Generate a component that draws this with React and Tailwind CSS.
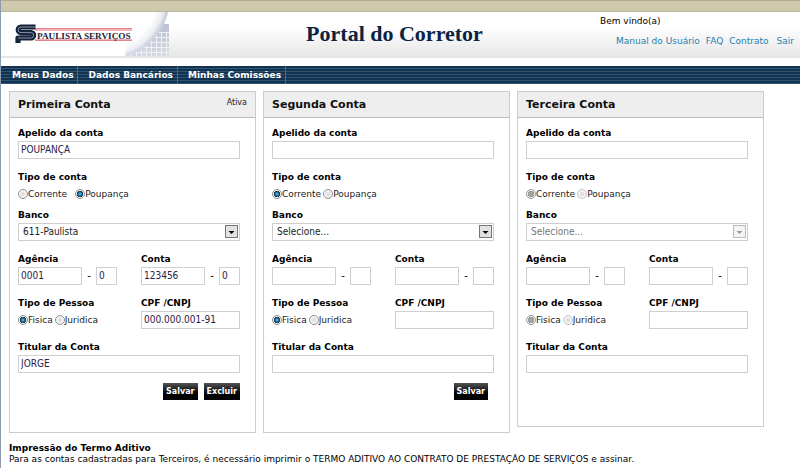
import { useState } from 'react';

const accounts = [
  {
    id: 'primeira',
    title: 'Primeira Conta',
    status: 'Ativa',
    nickname: 'POUPANÇA',
    type: 'poupanca',
    bank: '611-Paulista',
    branch: '0001',
    branchDigit: '0',
    number: '123456',
    numberDigit: '0',
    document: '000.000.001-91',
    holder: 'JORGE',
    actions: ['Salvar', 'Excluir'],
  },
  { id: 'segunda', title: 'Segunda Conta', type: 'corrente', bank: 'Selecione...', actions: ['Salvar'] },
  { id: 'terceira', title: 'Terceira Conta', type: 'corrente', bank: 'Selecione...', actions: [], disabled: true },
];

const navItems = ['Meus Dados', 'Dados Bancários', 'Minhas Comissões'];

const inputClass =
  "block h-[18px] min-w-0 rounded-none border border-[#cfcfcf] bg-white px-0.5 pb-px font-['DejaVu_Sans_Condensed','DejaVu_Sans',sans-serif] text-[10px] leading-[14px] text-[#2b1b4b] outline-none focus:border-[#1f7fb0]";

function Label({ htmlFor, children }) {
  return (
    <label htmlFor={htmlFor} className="block text-[9px] leading-4 font-bold text-black">
      {children}
    </label>
  );
}

function TextField({ id, label, value }) {
  return (
    <div>
      <Label htmlFor={id}>{label}</Label>
      <input id={id} type="text" defaultValue={value} className={`${inputClass} w-full`} />
    </div>
  );
}

// Number plus its check digit
function NumberField({ id, label, value, digit }) {
  return (
    <div>
      <Label htmlFor={id}>{label}</Label>
      <div className="flex items-center">
        <input id={id} type="text" defaultValue={value} className={`${inputClass} flex-1`} />
        <span className="w-3.5 text-center text-[10px] leading-4">-</span>
        <input aria-label={`${label} dígito`} type="text" defaultValue={digit} className={`${inputClass} w-[21px]`} />
      </div>
    </div>
  );
}

function RadioGroup({ name, legend, options, value, onChange, disabled, wide }) {
  return (
    <fieldset>
      <legend className="block text-[9px] leading-4 font-bold text-black">{legend}</legend>
      <div className={`flex h-[18px] items-center ${wide ? 'gap-2' : 'gap-0.5'}`}>
        {options.map((option) => (
          <label key={option.value} className="flex items-center text-[9px] leading-4 text-[#222]">
            <input
              type="radio"
              name={name}
              value={option.value}
              checked={value === option.value}
              disabled={disabled}
              onChange={() => onChange(option.value)}
              className="size-2.5 shrink-0 appearance-none rounded-full border border-[#8e8f8f] bg-[radial-gradient(circle,#d6d6d6,#fafafa_70%)] checked:bg-[radial-gradient(circle,#7cc4e8_0px,#15618c_2px,#123a58_3px,#f4f4f4_3px)] disabled:border-[#c4c4c4] disabled:checked:border-[#999] disabled:checked:bg-[radial-gradient(circle,#aaa_0px,#999_3px,#f4f4f4_3px)]"
            />
            {option.label}
          </label>
        ))}
      </div>
    </fieldset>
  );
}

function BankSelect({ id, value, disabled }) {
  return (
    <div>
      <Label htmlFor={id}>Banco</Label>
      <div className="relative">
        <select
          id={id}
          defaultValue={value}
          disabled={disabled}
          className="block h-[18px] w-full appearance-none rounded-none border border-[#cfcfcf] bg-white pl-1 font-['DejaVu_Sans_Condensed','DejaVu_Sans',sans-serif] text-[10px] leading-4 text-[#222] outline-none disabled:text-[#777] disabled:opacity-100"
        >
          <option>Selecione...</option>
          <option>611-Paulista</option>
        </select>
        <svg
          viewBox="0 0 13 14"
          className={`pointer-events-none absolute top-0.5 right-0.5 h-3.5 w-[13px] ${disabled ? 'text-[#999]' : 'text-black'}`}
        >
          <rect x="0.5" y="0.5" width="12" height="12" fill={disabled ? '#f4f4f4' : '#e2e2e2'} stroke={disabled ? '#bbb' : '#777'} />
          <path d="M3.5 6h6l-3 3z" fill="currentColor" />
        </svg>
      </div>
    </div>
  );
}

function AccountPanel({ account }) {
  const { id, disabled } = account;
  const [type, setType] = useState(account.type);
  const [person, setPerson] = useState('fisica');

  return (
    <form
      onSubmit={(e) => e.preventDefault()}
      className={`border border-[#ccc] bg-white ${account.actions.length ? 'pb-8' : 'pb-[53px]'}`}
    >
      <header className="flex h-[26px] items-center justify-between border-b border-[#bbb] bg-[#eee] px-2">
        <h2 className="text-[11px] leading-4 font-bold text-[#111]">{account.title}</h2>
        {account.status && <span className="pb-1 text-[8px] leading-4 text-[#222]">{account.status}</span>}
      </header>

      <div className="flex flex-col gap-2.5 pt-[7px] pr-[15px] pl-2">
        <TextField id={`${id}-apelido`} label="Apelido da conta" value={account.nickname} />
        <div className="flex flex-col gap-1">
          <RadioGroup
            name={`${id}-tipo`}
            legend="Tipo de conta"
            options={[
              { value: 'corrente', label: 'Corrente' },
              { value: 'poupanca', label: 'Poupança' },
            ]}
            value={type}
            onChange={setType}
            disabled={disabled}
            wide={Boolean(account.status)}
          />
          <BankSelect id={`${id}-banco`} value={account.bank} disabled={disabled} />
        </div>
        <div className="grid grid-cols-2 gap-x-6 gap-y-2.5">
          <NumberField id={`${id}-agencia`} label="Agência" value={account.branch} digit={account.branchDigit} />
          <NumberField id={`${id}-conta`} label="Conta" value={account.number} digit={account.numberDigit} />
          <RadioGroup
            name={`${id}-pessoa`}
            legend="Tipo de Pessoa"
            options={[
              { value: 'fisica', label: 'Fisica' },
              { value: 'juridica', label: 'Juridica' },
            ]}
            value={person}
            onChange={setPerson}
            disabled={disabled}
          />
          <TextField id={`${id}-documento`} label="CPF /CNPJ" value={account.document} />
        </div>
        <TextField id={`${id}-titular`} label="Titular da Conta" value={account.holder} />
        {account.actions.length > 0 && (
          <div className={`flex justify-end gap-1.5 ${account.actions.length === 1 ? 'pr-1.5' : ''}`}>
            {account.actions.map((action) => (
              <button
                key={action}
                type="submit"
                className="h-[17px] bg-linear-to-b from-[#555] to-black to-80% px-[3px] text-[8px] leading-4 font-bold text-white"
              >
                {action}
              </button>
            ))}
          </div>
        )}
      </div>
    </form>
  );
}

function Logo() {
  return (
    <svg viewBox="0 0 168 45" className="h-[45px] w-[168px]" role="img" aria-label="Paulista Serviços">
      <defs>
        <radialGradient id="fold" gradientUnits="userSpaceOnUse" cx="105" cy="-15" r="65">
          <stop offset="0.78" stopColor="#fff" />
          <stop offset="0.9" stopColor="#eceef4" />
          <stop offset="1" stopColor="#b9bfd0" />
        </radialGradient>
        <linearGradient id="tiles" x1="0" y1="0" x2="0" y2="1">
          <stop offset="0" stopColor="#bbc1cf" />
          <stop offset="1" stopColor="#d6d9e2" />
        </linearGradient>
        <pattern id="grid" width="5" height="5" patternUnits="userSpaceOnUse">
          <path d="M0 .5h5M.5 0v5" stroke="#f1f2f6" strokeWidth="1" />
        </pattern>
      </defs>
      <path d="M156 12h12v32h-44z" fill="url(#tiles)" />
      <path d="M156 20h12v24h-44z" fill="url(#grid)" />
      <path d="M0 0h167C163 18 148 38 124 44H0z" fill="#fff" />
      <path d="M130 0h37C163 18 148 38 124 44z" fill="url(#fold)" />
      <path d="M34 16h97v3H34zM34 27h97v2H34z" fill="#f3b3b8" />
      <path d="M34 16.5h97M34 28.5h97" stroke="#e2848d" />
      <g fill="none" strokeLinejoin="round">
        <path d="M34.500 15H20a2.800 2.800 0 0 0 0 5.600H30a2.700 2.700 0 0 1 0 5.400H17v5" stroke="#14223a" strokeWidth="5.200" />
        <path d="M35 15H20a2.800 2.800 0 0 0 0 5.600H30a2.700 2.700 0 0 1 0 5.400H17" stroke="#93a0b3" strokeWidth="0.900" />
      </g>
      <text x="36" y="27" fontFamily="'Liberation Serif', serif" fontSize="9.2" fontWeight="700" fill="#1c2136">
        PAULISTA SERVIÇOS
      </text>
    </svg>
  );
}

export default function App() {
  return (
    <div className="min-h-screen border-l border-[#8b9bb0] bg-white font-['DejaVu_Sans',Verdana,sans-serif] text-black">
      <div className="h-3 border-t border-b border-t-[#b0ab93] border-b-[#b8b5a0] bg-[#cdc9aa]" />

      <header className="flex h-[46px] items-start bg-linear-to-b from-white from-30% to-[#e6e6e6]">
        <Logo />
        <h1 className="flex-1 pt-2 pl-5 text-center font-['Liberation_Serif',serif] text-[22px] leading-7 font-bold text-[#0b2340]">
          Portal do Corretor
        </h1>
        <div className="w-[200px] shrink-0 pt-px text-[9px] leading-4">
          <p>Bem vindo(a)</p>
          <nav className="flex gap-1.5 pt-1 pl-4 text-[#1f7fb0]">
            <a href="#manual">Manual do Usuário</a>
            <a href="#faq">FAQ</a>
            <a href="#contrato">Contrato</a>
            <a href="#sair" className="pl-0.5">Sair</a>
          </nav>
        </div>
      </header>

      <nav className="mt-2 flex h-[18px] bg-[repeating-linear-gradient(#12324f_0px,#12324f_2px,#2b5571_2px,#2b5571_3px)] pl-px">
        {navItems.map((item) => (
          <a
            key={item}
            href="#"
            className="border-r border-[#4d6a80] pr-1 pl-2.5 text-[9px] leading-[18px] font-bold text-white"
          >
            {item}
          </a>
        ))}
      </nav>

      <main className="pt-[7px] pr-9 pl-2">
        <div className="grid grid-cols-3 items-start gap-[7px]">
          {accounts.map((account) => (
            <AccountPanel key={account.id} account={account} />
          ))}
        </div>
        <section className="pt-2.5 text-[9px] leading-[11px]">
          <h3 className="font-bold">Impressão do Termo Aditivo</h3>
          <p>
            Para as contas cadastradas para Terceiros, é necessário imprimir o TERMO ADITIVO AO CONTRATO DE PRESTAÇÃO DE
            SERVIÇOS e assinar.
          </p>
        </section>
      </main>
    </div>
  );
}
